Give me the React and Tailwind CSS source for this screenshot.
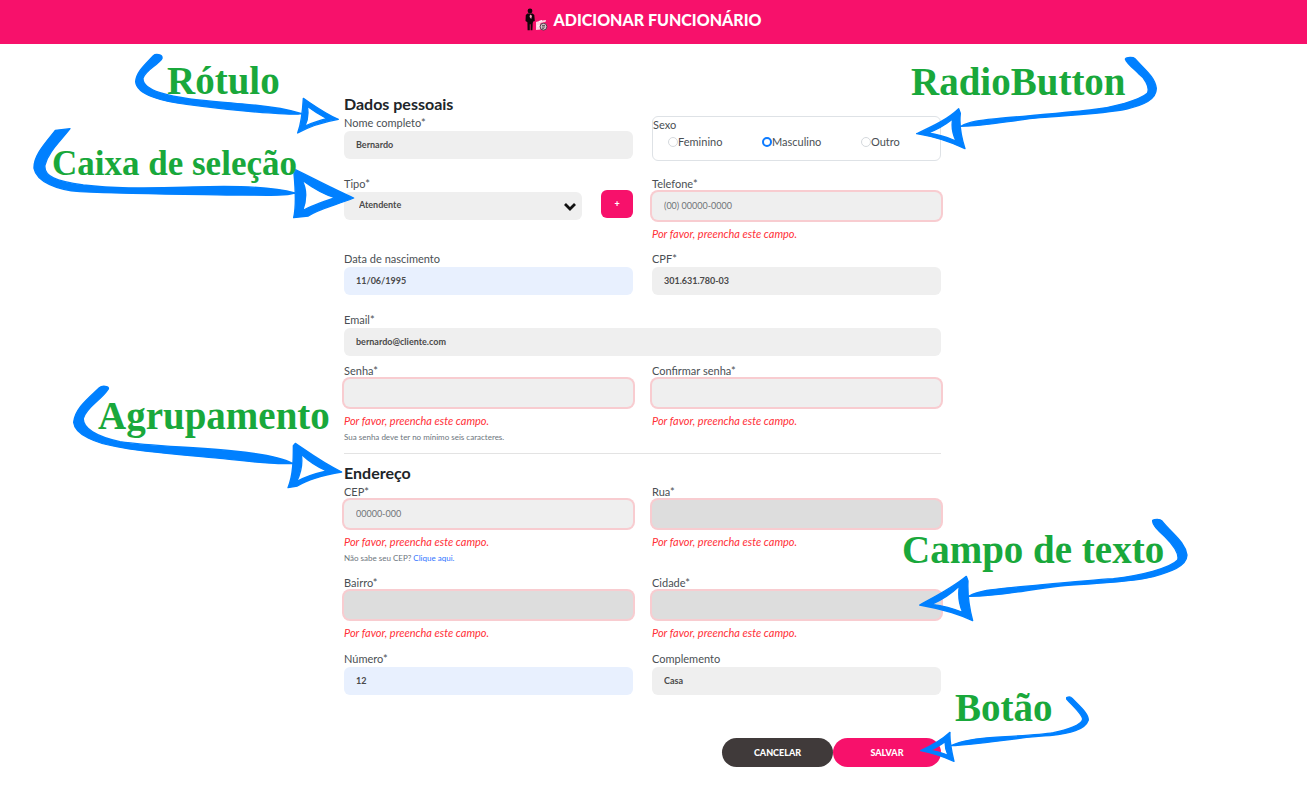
import React from "react";

const inputBase =
  "block h-7 w-full rounded-md px-3 pb-0.5 text-[9px] font-bold text-[#4a4a4a] outline-none placeholder:font-normal placeholder:text-[#6f7479]";

const tones = {
  plain: "bg-[#efefef]",
  filled: "bg-[#e8f0fe]",
  locked: "bg-[#dddddd]",
};

function Label({ htmlFor, children }) {
  return (
    <label htmlFor={htmlFor} className="block text-[11px] leading-[17px] text-[#4a4f54]">
      {children}
    </label>
  );
}

function Field({ id, label, type = "text", value, placeholder, tone = "plain", error, hint }) {
  return (
    <div>
      <Label htmlFor={id}>{label}</Label>
      <input
        id={id}
        type={type}
        defaultValue={value}
        placeholder={placeholder}
        readOnly={tone === "locked"}
        className={`${inputBase} ${tones[tone]} ${error ? "ring-2 ring-[#f8ccd0]" : ""}`}
      />
      {error && (
        <p className="mt-1.5 text-[11px] leading-4 text-[#ff3038] italic">
          Por favor, preencha este campo.
        </p>
      )}
      {hint && <p className="text-[8px] leading-4 text-[#6c757d]">{hint}</p>}
    </div>
  );
}

function Row({ className = "", children }) {
  return <div className={`grid grid-cols-2 gap-x-[19px] ${className}`}>{children}</div>;
}

function Radio({ id, label, checked }) {
  return (
    <div className="flex items-center">
      <input
        id={id}
        type="radio"
        name="sexo"
        defaultChecked={checked}
        className="size-2.5 appearance-none rounded-full border border-[#d5d9dd] bg-white checked:border-2 checked:border-[#0d7bff]"
      />
      <label htmlFor={id} className="text-[11px] leading-[17px] text-[#4a4f54]">
        {label}
      </label>
    </div>
  );
}

function StaffIcon() {
  return (
    <svg viewBox="0 0 24 24" className="h-6 w-6" aria-hidden="true">
      <circle cx="6" cy="3" r="2.4" fill="#120509" />
      <path d="M3.5 5.5h5l1.8 1.5.5 6-1.6.6-.5 1.6-.3 7H6.6v-6h-.8v6H3.6l-.2-8L1.5 13l.3-6z" fill="#120509" />
      <path d="M6 6.5l2 1.2-.8 3.3L5.6 9z" fill="#ff9cc1" />
      <path d="M12 14l4-1.2 6-.8-.5 2-5 1v6.5L12 22z" fill="#ffd3e2" />
      <path d="M15 13.5l3-1M13 18h2" stroke="#fff" strokeWidth="1" />
      <circle cx="19.5" cy="18.7" r="3.4" fill="#d5c5cb" stroke="#55404a" strokeWidth="1" />
      <path d="M18 17.5h3M18 19h3M18 20.4h2" stroke="#3c2b33" strokeWidth=".7" />
    </svg>
  );
}

const notes = [
  {
    text: "Rótulo",
    textClass: "left-[167px] top-[59px] text-[39px]",
    svgClass: "left-[20px] top-[45px] w-[340px]",
    viewBox: "0 0 1020 555",
    d: "M400 32C407 26 428 28 426 40C415 60 375 75 369 100C368 120 390 133 420 143C490 165 580 168 680 178C740 183 800 192 845 206C820 211 770 205 720 202C640 196 560 186 500 178C430 170 350 150 347 110C349 80 378 56 400 32Z M850 160C880 180 915 206 955 223C910 231 870 243 833 264C846 230 848 195 850 160Z M862 184C866 203 864 223 855 243C876 234 898 226 921 221C900 210 880 198 862 184Z",
  },
  {
    text: "Caixa de seleção",
    textClass: "left-[52px] top-[142px] text-[35px]",
    svgClass: "left-[20px] top-[45px] w-[340px]",
    viewBox: "0 0 1020 555",
    d: "M106 256L150 251C120 290 85 320 75 360C70 395 110 408 190 420C300 433 400 428 520 426C640 422 760 425 824 444C790 454 740 450 620 450C480 448 330 447 180 440C110 435 50 410 42 370C40 330 80 290 106 256Z M826 374C880 400 940 432 1001 459C950 480 895 492 865 513L821 518C830 480 826 430 822 386Z M846 405C862 435 860 465 848 497C875 482 910 470 945 458C910 448 880 430 846 405Z",
  },
  {
    text: "RadioButton",
    textClass: "left-[911px] top-[60px] text-[39px]",
    svgClass: "left-[880px] top-[45px] w-[300px]",
    viewBox: "0 0 900 330",
    d: "M736 42C740 36 760 36 765 41C790 70 825 95 829 130C829 165 790 180 740 192C660 208 560 210 480 218C400 225 320 243 243 244C270 228 310 225 350 221C450 212 560 203 630 195C700 188 780 165 802 145C812 125 790 95 775 85C760 70 740 55 736 42Z M236 191L241 205C237 240 245 280 255 311C215 292 165 275 110 266C155 245 200 225 236 191Z M218 222C195 240 170 255 143 264C175 268 205 278 228 288C217 265 214 243 218 222Z",
  },
  {
    text: "Agrupamento",
    textClass: "left-[98px] top-[394px] text-[39px]",
    svgClass: "left-[60px] top-[375px] w-[300px]",
    viewBox: "0 0 900 360",
    d: "M118 38C125 32 148 32 145 42C125 75 80 95 70 130C68 160 110 185 180 200C280 215 400 215 520 228C590 235 660 245 697 265C640 270 560 258 480 250C380 240 250 232 170 215C110 205 45 180 41 142C45 100 85 70 118 38Z M706 205C750 235 790 265 845 291C790 300 740 315 712 333L684 338C700 300 700 250 700 212Z M724 238C728 262 722 295 710 320C735 305 770 295 800 288C770 275 745 258 724 238Z",
  },
  {
    text: "Campo de texto",
    textClass: "left-[902px] top-[528px] text-[39px]",
    svgClass: "left-[880px] top-[505px] w-[320px]",
    viewBox: "0 0 960 390",
    d: "M818 46C825 42 840 42 845 47C875 85 915 110 921 150C920 185 870 200 820 215C740 235 620 235 540 243C450 252 360 275 266 274C300 255 350 252 400 247C500 238 620 226 700 221C780 212 870 190 893 165C900 140 870 110 855 95C835 78 815 60 818 46Z M259 214L264 228C262 270 268 310 278 347C235 326 175 310 119 300C165 275 215 250 259 214Z M238 243C215 265 185 285 155 298C185 302 218 310 248 322C236 295 234 270 238 243Z",
  },
  {
    text: "Botão",
    textClass: "left-[955px] top-[686px] text-[39px]",
    svgClass: "left-[700px] top-[685px] w-[400px]",
    viewBox: "0 0 1200 285",
    d: "M1100 38C1107 34 1113 36 1116 40C1140 65 1165 85 1165 105C1155 135 1110 145 1050 152C960 155 850 178 753 182C790 165 830 160 880 157C960 152 1020 150 1060 143C1100 135 1145 120 1148 102C1145 85 1115 60 1100 42Z M750 142C748 170 755 200 762 229C730 215 695 203 662 197C695 182 725 165 750 142Z M735 170C720 182 705 189 690 196C710 198 728 204 744 211C738 197 735 184 735 170Z",
  },
];

function Annotations() {
  return (
    <div className="pointer-events-none absolute inset-x-0 top-0 flex justify-center">
      <div className="relative w-[1307px] shrink-0">
        {notes.map((n) => (
          <React.Fragment key={n.text}>
            <svg viewBox={n.viewBox} className={`absolute ${n.svgClass}`} aria-hidden="true">
              <path
                d={n.d}
                fill="#0080ff"
                fillRule="evenodd"
                stroke="#0080ff"
                strokeWidth="4"
                strokeLinejoin="round"
              />
            </svg>
            <span
              className={`absolute font-['Liberation_Serif',serif] leading-[44px] font-bold whitespace-nowrap text-[#19a83b] ${n.textClass}`}
            >
              {n.text}
            </span>
          </React.Fragment>
        ))}
      </div>
    </div>
  );
}

export default function App() {
  return (
    <div className="relative min-h-screen overflow-x-hidden bg-white font-[Lato,sans-serif]">
      <header className="flex h-11 items-center justify-center gap-1.5 bg-[#f7116b] pr-[22px] pb-1">
        <StaffIcon />
        <h1 className="text-base leading-6 font-black text-white">ADICIONAR FUNCIONÁRIO</h1>
      </header>

      <form className="mx-auto max-w-[619px] pt-[50px] pr-[22px]" onSubmit={(e) => e.preventDefault()}>
        <h2 className="text-base leading-5 font-bold text-[#212529]">Dados pessoais</h2>
        <Row>
          <Field id="nome" label="Nome completo*" value="Bernardo" />
          <fieldset className="mt-0.5 -mb-0.5 h-[45px] rounded-md border border-[#dee2e6]">
            <legend className="float-left w-full text-[11px] leading-4 text-[#4a4f54]">Sexo</legend>
            <div className="clear-both grid grid-cols-[94px_99px_auto] pl-[15px]">
              <Radio id="feminino" label="Feminino" />
              <Radio id="masculino" label="Masculino" checked />
              <Radio id="outro" label="Outro" />
            </div>
          </fieldset>
        </Row>

        <Row className="mt-4">
          <div>
            <Label htmlFor="tipo">Tipo*</Label>
            <div className="flex gap-[19px]">
              <div className="relative flex-1">
                <select
                  id="tipo"
                  className="block h-7 w-full appearance-none rounded-md bg-[#efefef] px-[15px] pb-0.5 text-[9px] font-bold text-[#4a4a4a] outline-none"
                >
                  <option>Atendente</option>
                </select>
                <svg
                  viewBox="0 0 14 10"
                  className="pointer-events-none absolute top-2.5 right-[5px] w-3.5"
                  aria-hidden="true"
                >
                  <path d="M2 2l5 5 5-5" fill="none" stroke="#111" strokeWidth="2.8" />
                </svg>
              </div>
              <button
                type="button"
                aria-label="Adicionar tipo"
                className="-mt-0.5 h-7 w-8 rounded-md bg-[#f7116b] text-[9px] font-black text-white"
              >
                +
              </button>
            </div>
          </div>
          <Field id="telefone" label="Telefone*" placeholder="(00) 00000-0000" error />
        </Row>

        <Row className="mt-2">
          <Field id="nascimento" label="Data de nascimento" value="11/06/1995" tone="filled" />
          <Field id="cpf" label="CPF*" value="301.631.780-03" />
        </Row>

        <div className="mt-4">
          <Field id="email" label="Email*" type="email" value="bernardo@cliente.com" />
        </div>

        <Row className="mt-1.5">
          <Field
            id="senha"
            label="Senha*"
            type="password"
            error
            hint="Sua senha deve ter no mínimo seis caracteres."
          />
          <Field id="confirmar" label="Confirmar senha*" type="password" error />
        </Row>

        <hr className="mt-2 mb-[9px] border-[#e3e3e3]" />

        <h2 className="text-base leading-5 font-bold text-[#212529]">Endereço</h2>
        <Row>
          <Field
            id="cep"
            label="CEP*"
            placeholder="00000-000"
            error
            hint={
              <>
                Não sabe seu CEP?{" "}
                <a href="#cep" className="text-[#2f74ff]">
                  Clique aqui.
                </a>
              </>
            }
          />
          <Field id="rua" label="Rua*" tone="locked" error />
        </Row>
        <Row className="mt-2">
          <Field id="bairro" label="Bairro*" tone="locked" error />
          <Field id="cidade" label="Cidade*" tone="locked" error />
        </Row>
        <Row className="mt-[9px]">
          <Field id="numero" label="Número*" value="12" tone="filled" />
          <Field id="complemento" label="Complemento" value="Casa" />
        </Row>

        <div className="mt-[43px] flex justify-end">
          <button type="button" className="h-[29px] w-[111px] rounded-full bg-[#403a3a] text-[9px] font-black text-white">
            CANCELAR
          </button>
          <button type="submit" className="h-[29px] w-[108px] rounded-full bg-[#f7116b] text-[9px] font-black text-white">
            SALVAR
          </button>
        </div>
      </form>

      <Annotations />
    </div>
  );
}
